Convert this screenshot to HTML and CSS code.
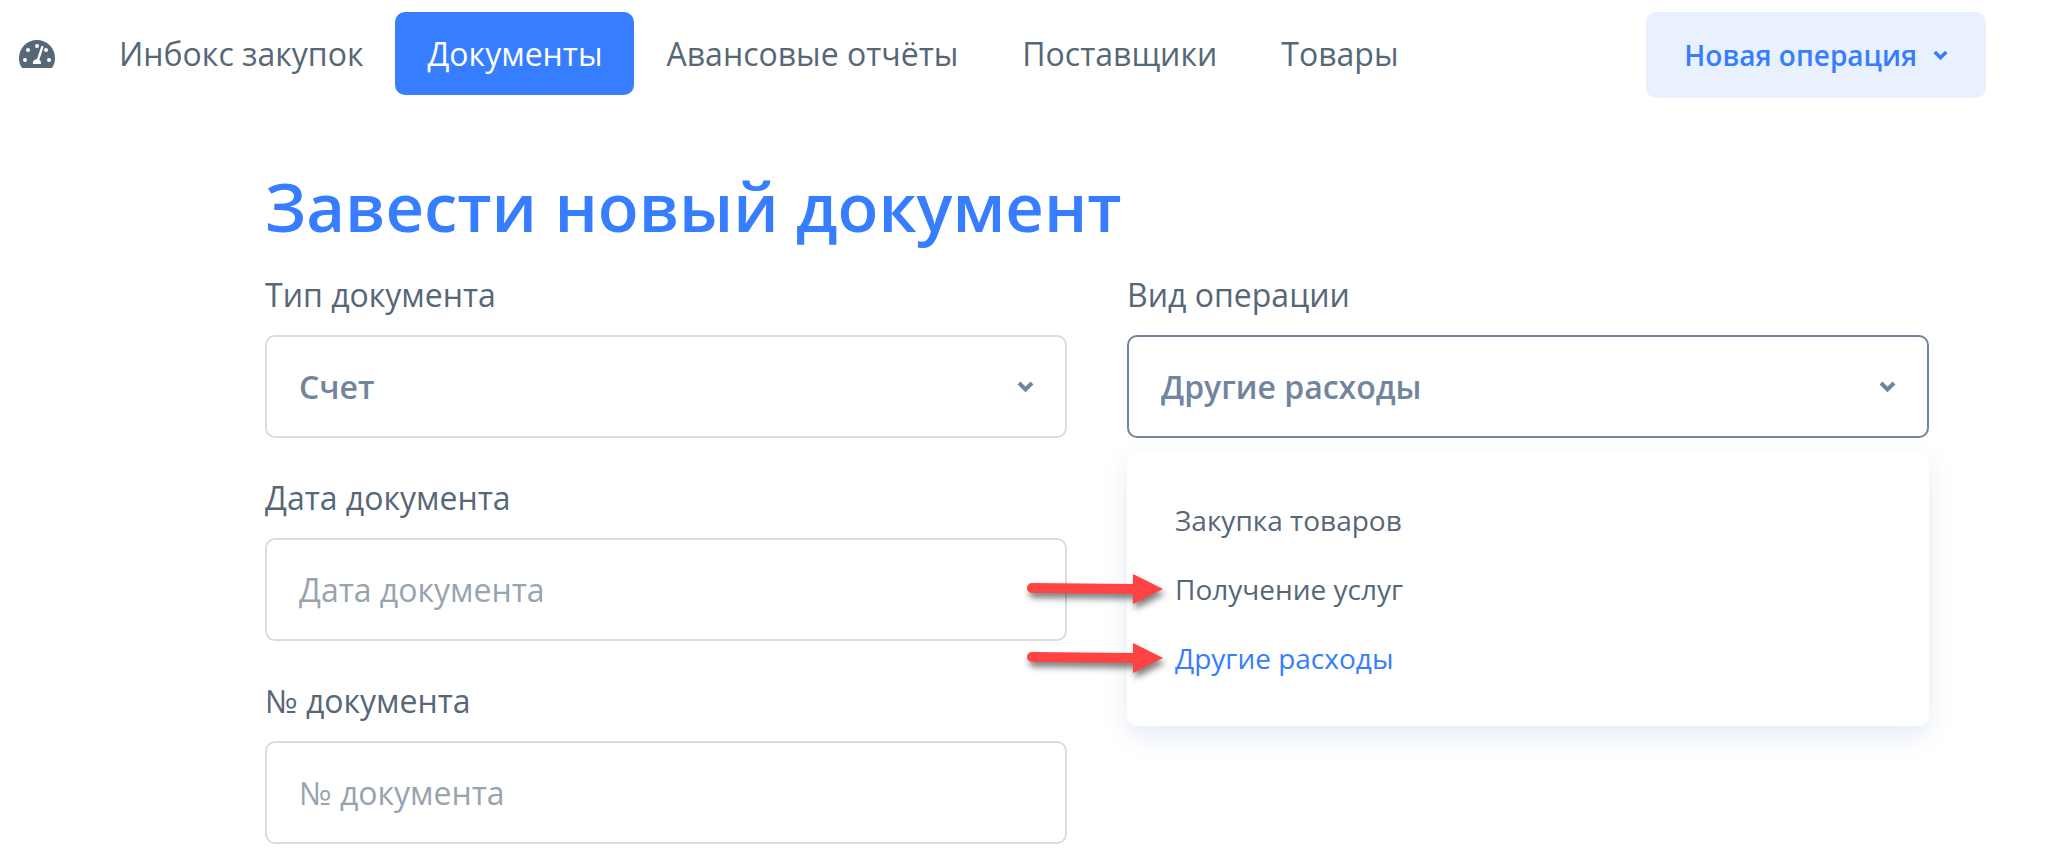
FILE: index.html
```
<!DOCTYPE html>
<html lang="ru">
<head>
    <meta charset="UTF-8">
    <meta name="viewport" content="width=device-width, initial-scale=1.0">
    <title>Завести новый документ</title>
    <link rel="stylesheet" href="styles.css">
</head>
<body>
    <!-- Top navigation -->
    <header class="header">
        <nav class="nav">
            <a class="nav-link nav-home" href="#" aria-label="Главная">
                <svg class="nav-icon" viewBox="0 0 36 28" aria-hidden="true">
                    <path fill="currentColor" d="M18 0C8 0 0 8 0 18c0 3.400.9 6.600 2.500 9.300.3.500.7.700 1.200.7h28.600c.5 0 .9-.2 1.200-.7C35.100 24.600 36 21.400 36 18 36 8 28 0 18 0z"/>
                    <g fill="#fff">
                        <circle cx="18" cy="6" r="2"/>
                        <circle cx="9" cy="10" r="2"/>
                        <circle cx="27" cy="10" r="2"/>
                        <circle cx="6" cy="20" r="2"/>
                        <circle cx="30" cy="20" r="2"/>
                        <path d="M22.300 6.300c.3-.8 2.400-.3 2.200.7L20.300 19.700c1.300.8 2 2.400 1.700 4.300h-8c-.4-2.700 1.300-4.800 4-5z"/>
                    </g>
                </svg>
            </a>
            <a class="nav-link" href="#">Инбокс закупок</a>
            <a class="nav-link active" href="#">Документы</a>
            <a class="nav-link" href="#">Авансовые отчёты</a>
            <a class="nav-link" href="#">Поставщики</a>
            <a class="nav-link" href="#">Товары</a>
        </nav>
        <button class="btn-new" type="button">
            Новая операция
            <svg class="btn-chevron" viewBox="0 0 17 11" aria-hidden="true">
                <path d="M2 2l6.500 6.500L15 2" fill="none" stroke="currentColor" stroke-width="4"/>
            </svg>
        </button>
    </header>

    <!-- Document form -->
    <main class="content">
        <h1 class="title">Завести новый документ</h1>
        <form class="form">
            <div class="column">
                <div class="field">
                    <label for="doc-type">Тип документа</label>
                    <div class="select">
                        <select id="doc-type" class="control">
                            <option>Счет</option>
                        </select>
                        <svg class="chevron" viewBox="0 0 17 11" aria-hidden="true">
                            <path d="M2 2l6.500 6.500L15 2" fill="none" stroke="currentColor" stroke-width="4"/>
                        </svg>
                    </div>
                </div>
                <div class="field">
                    <label for="doc-date">Дата документа</label>
                    <input id="doc-date" class="control" type="text" placeholder="Дата документа">
                </div>
                <div class="field">
                    <label for="doc-number">№ документа</label>
                    <input id="doc-number" class="control" type="text" placeholder="№ документа">
                </div>
            </div>

            <div class="column">
                <div class="field">
                    <label for="operation">Вид операции</label>
                    <div class="select">
                        <select id="operation" class="control open">
                            <option>Закупка товаров</option>
                            <option>Получение услуг</option>
                            <option selected>Другие расходы</option>
                        </select>
                        <svg class="chevron" viewBox="0 0 17 11" aria-hidden="true">
                            <path d="M2 2l6.500 6.500L15 2" fill="none" stroke="currentColor" stroke-width="4"/>
                        </svg>
                    </div>
                    <ul class="menu">
                        <li class="menu-item"><a href="#">Закупка товаров</a></li>
                        <li class="menu-item">
                            <svg class="arrow" viewBox="0 0 136 30" aria-hidden="true">
                                <path d="M5 9L106 10V0L136 15L106 30V20L5 19A5 5 0 0 1 5 9z" fill="#ff4343"/>
                            </svg>
                            <a href="#">Получение услуг</a>
                        </li>
                        <li class="menu-item">
                            <svg class="arrow" viewBox="0 0 136 30" aria-hidden="true">
                                <path d="M5 9L106 10V0L136 15L106 30V20L5 19A5 5 0 0 1 5 9z" fill="#ff4343"/>
                            </svg>
                            <a class="selected" href="#">Другие расходы</a>
                        </li>
                    </ul>
                </div>
            </div>
        </form>
    </main>
</body>
</html>
```
FILE: styles.css
```
* {
    box-sizing: border-box;
}
body {
    margin: 0;
    background: #fff;
    color: #566778;
    font-family: "Open Sans", "Noto Sans", sans-serif;
    font-size: 32px;
    line-height: 44px;
}
a {
    color: inherit;
    text-decoration: none;
}

/* Header */
.header {
    display: flex;
    justify-content: space-between;
    align-items: flex-start;
    padding: 12px 71px 0 0;
}
.nav {
    display: flex;
    align-items: center;
}
.nav-link {
    display: flex;
    align-items: center;
    height: 83px;
    padding: 0 32px;
    border-radius: 10px;
    white-space: nowrap;
}
.nav-link.active {
    background: #377dff;
    color: #fff;
}
.nav-home {
    padding-left: 19px;
}
.nav-icon {
    width: 36px;
    height: 28px;
}
.btn-new {
    display: flex;
    align-items: center;
    gap: 16px;
    height: 86px;
    padding: 0 38px;
    border: none;
    border-radius: 10px;
    background: #e9f1ff;
    color: #377dff;
    font-family: inherit;
    font-size: 28px;
    font-weight: 600;
    white-space: nowrap;
    cursor: pointer;
}
.btn-chevron {
    width: 15px;
    height: 10px;
}

/* Form */
.content {
    padding: 58px 128px 0 265px;
}
.title {
    margin: 0 0 17px;
    color: #377dff;
    font-size: 67px;
    font-weight: 600;
    line-height: 100px;
}
.form {
    display: grid;
    grid-template-columns: 1fr 1fr;
    gap: 60px;
}
.column {
    display: flex;
    flex-direction: column;
    gap: 38px;
}
.field {
    position: relative;
    display: flex;
    flex-direction: column;
    gap: 18px;
}
.select {
    display: grid;
    align-items: center;
}
.select .control,
.chevron {
    grid-area: 1 / 1;
}
.control {
    width: 100%;
    height: 103px;
    padding: 0 32px;
    border: 2px solid #dcdcdc;
    border-radius: 10px;
    background: #fff;
    color: #71869d;
    font-family: inherit;
    font-size: 32px;
    outline: none;
}
select.control {
    appearance: none;
    font-weight: 600;
}
.control.open {
    border-color: #71869d;
}
.control::placeholder {
    color: #97a4af;
    opacity: 1;
}
.chevron {
    justify-self: end;
    width: 17px;
    height: 11px;
    margin-right: 33px;
    color: #71869d;
    pointer-events: none;
}

/* Opened list of operations */
.menu {
    position: absolute;
    top: 100%;
    left: 0;
    right: 0;
    z-index: 1;
    margin: 13px 0 0;
    padding: 34px 48px;
    border-radius: 10px;
    background: #fff;
    box-shadow: 0 10px 24px rgba(70, 110, 180, 0.14);
    list-style: none;
    font-size: 28px;
}
.menu-item {
    position: relative;
    display: flex;
    align-items: center;
    height: 69px;
}
.menu-item .selected {
    color: #377dff;
}
.arrow {
    position: absolute;
    right: 100%;
    width: 136px;
    height: 30px;
    margin-right: 12px;
    overflow: visible;
    filter: drop-shadow(2px 5px 3px rgba(0, 0, 0, 0.5));
}
```
